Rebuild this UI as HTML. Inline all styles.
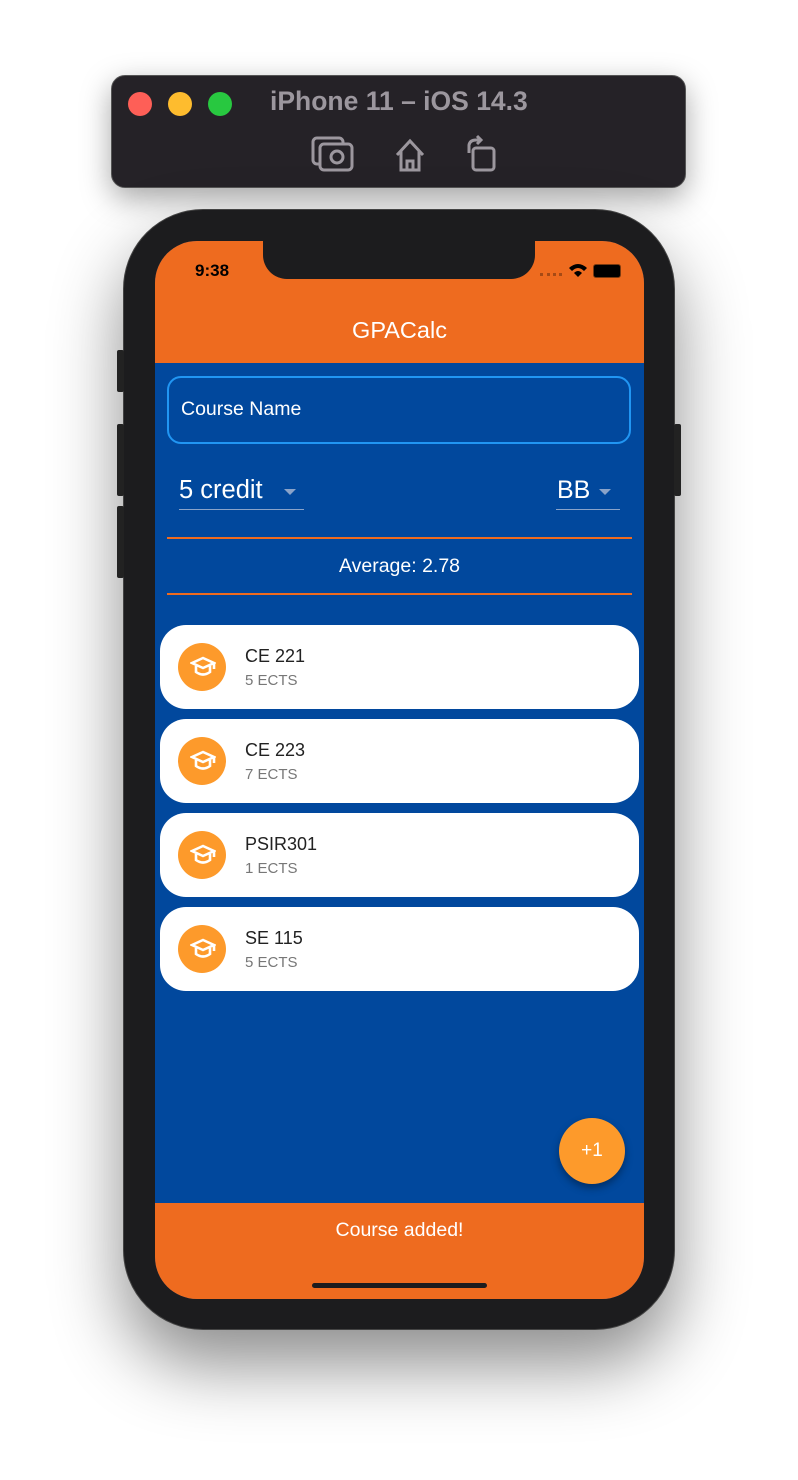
<!DOCTYPE html><html><head><style>
body{margin:0;width:798px;height:1480px;background:#fff;position:relative;overflow:hidden;font-family:"Liberation Sans",sans-serif}
.a{position:absolute}
</style></head><body>
<div class="a" style="left:111px;top:75px;width:575px;height:113px;background:#252227;border-radius:14px;border:1px solid #555;box-sizing:border-box;box-shadow:0 10px 30px rgba(0,0,0,.35)"></div>
<div class="a" style="left:128px;top:92px;width:24px;height:24px;border-radius:50%;background:#fe5f57"></div>
<div class="a" style="left:168px;top:92px;width:24px;height:24px;border-radius:50%;background:#febc2e"></div>
<div class="a" style="left:208px;top:92px;width:24px;height:24px;border-radius:50%;background:#28c840"></div>
<div class="a" style="left:270px;top:86px;font-size:26.5px;font-weight:bold;color:#9c979e">iPhone 11 – iOS 14.3</div>
<svg class="a" style="left:310px;top:133px" width="190" height="40" fill="none" stroke="#9c979e" stroke-width="3">
<rect x="3" y="5" width="30" height="26" rx="4"/><rect x="10" y="11" width="32" height="26" rx="4" fill="#252227"/><circle cx="27" cy="24" r="6"/>
<path d="M87 22 L100 8 L113 22 M91 18 V37 H109 V18 M97 37 V28 H103 V37"/>
<rect x="163" y="15" width="21" height="22" rx="3"/><path d="M159 20 V12 Q160 7 166 7 H171 M167 3 L171 7 L167 11"/>
</svg>
<div class="a" style="left:123px;top:209px;width:552px;height:1121px;background:#1c1c1e;border-radius:80px;box-shadow:0 35px 70px rgba(0,0,0,.45);border:1px solid #444;box-sizing:border-box"></div>
<div class="a" style="left:117px;top:350px;width:7px;height:42px;background:#222;border-radius:2px"></div>
<div class="a" style="left:117px;top:424px;width:7px;height:72px;background:#222;border-radius:2px"></div>
<div class="a" style="left:117px;top:506px;width:7px;height:72px;background:#222;border-radius:2px"></div>
<div class="a" style="left:674px;top:424px;width:7px;height:72px;background:#222;border-radius:2px"></div>
<div class="a" style="left:155px;top:241px;width:489px;height:1058px;background:#01489d;border-radius:42px;overflow:hidden">
 <div class="a" style="left:0;top:0;width:489px;height:122px;background:#ee6b1f"></div>
 <div class="a" style="left:108px;top:-2px;width:272px;height:40px;background:#1c1c1e;border-radius:0 0 24px 24px"></div>
 <div class="a" style="left:40px;top:20px;font-size:17px;font-weight:bold;color:#000">9:38</div>
 <div class="a" style="left:385px;top:32px;width:22px;height:3px;border-top:3px dotted rgba(0,0,0,.3)"></div>
 <svg class="a" style="left:413px;top:22px" width="20" height="14"><path d="M1 5 Q10 -3 19 5 L16 8 Q10 2 4 8Z M6 10 Q10 6 14 10 L10 14Z" fill="#000"/></svg>
 <div class="a" style="left:438px;top:23px;width:26px;height:12px;background:#000;border-radius:3px;border:1px solid #7a3a10"></div>
 <div class="a" style="left:0;top:76px;width:489px;text-align:center;font-size:23.5px;color:#fff">GPACalc</div>
 <div class="a" style="left:12px;top:135px;width:464px;height:68px;border:2px solid #2196f3;border-radius:14px;box-sizing:border-box"></div>
 <div class="a" style="left:26px;top:157px;font-size:19.5px;color:#fff">Course Name</div>
 <div class="a" style="left:24px;top:235px;font-size:25.5px;color:#fff">5 credit</div>
 <div class="a" style="left:129px;top:248px;border:6px solid transparent;border-top-color:#8aa3c9"></div>
 <div class="a" style="left:24px;top:268px;width:125px;height:1px;background:#8aa3c9"></div>
 <div class="a" style="left:402px;top:235px;font-size:25px;color:#fff">BB</div>
 <div class="a" style="left:444px;top:248px;border:6px solid transparent;border-top-color:#8aa3c9"></div>
 <div class="a" style="left:401px;top:268px;width:64px;height:1px;background:#8aa3c9"></div>
 <div class="a" style="left:12px;top:296px;width:465px;height:2px;background:#ee6b1f"></div>
 <div class="a" style="left:0;top:314px;width:489px;text-align:center;font-size:19.5px;color:#fff">Average: 2.78</div>
 <div class="a" style="left:12px;top:352px;width:465px;height:2px;background:#ee6b1f"></div>
 <div class="a" style="left:5px;top:384px;width:479px">
  <div style="height:84px;background:#fff;border-radius:26px;margin-bottom:10px;position:relative"><div class="a" style="left:18px;top:18px;width:48px;height:48px;border-radius:50%;background:#fd9a2b"></div><svg class="a" style="left:30px;top:31px" width="26" height="22" fill="none" stroke="#fff" stroke-width="2.6"><path d="M2 7 L13 2 L24 7 L13 12Z M6 10 V16 Q13 21 20 16 V10 M24 7 V13"/></svg><div class="a" style="left:85px;top:21px;font-size:18px;color:#222">CE 221</div><div class="a" style="left:85px;top:47px;font-size:15px;color:#777">5 ECTS</div></div>
  <div style="height:84px;background:#fff;border-radius:26px;margin-bottom:10px;position:relative"><div class="a" style="left:18px;top:18px;width:48px;height:48px;border-radius:50%;background:#fd9a2b"></div><svg class="a" style="left:30px;top:31px" width="26" height="22" fill="none" stroke="#fff" stroke-width="2.6"><path d="M2 7 L13 2 L24 7 L13 12Z M6 10 V16 Q13 21 20 16 V10 M24 7 V13"/></svg><div class="a" style="left:85px;top:21px;font-size:18px;color:#222">CE 223</div><div class="a" style="left:85px;top:47px;font-size:15px;color:#777">7 ECTS</div></div>
  <div style="height:84px;background:#fff;border-radius:26px;margin-bottom:10px;position:relative"><div class="a" style="left:18px;top:18px;width:48px;height:48px;border-radius:50%;background:#fd9a2b"></div><svg class="a" style="left:30px;top:31px" width="26" height="22" fill="none" stroke="#fff" stroke-width="2.6"><path d="M2 7 L13 2 L24 7 L13 12Z M6 10 V16 Q13 21 20 16 V10 M24 7 V13"/></svg><div class="a" style="left:85px;top:21px;font-size:18px;color:#222">PSIR301</div><div class="a" style="left:85px;top:47px;font-size:15px;color:#777">1 ECTS</div></div>
  <div style="height:84px;background:#fff;border-radius:26px;margin-bottom:10px;position:relative"><div class="a" style="left:18px;top:18px;width:48px;height:48px;border-radius:50%;background:#fd9a2b"></div><svg class="a" style="left:30px;top:31px" width="26" height="22" fill="none" stroke="#fff" stroke-width="2.6"><path d="M2 7 L13 2 L24 7 L13 12Z M6 10 V16 Q13 21 20 16 V10 M24 7 V13"/></svg><div class="a" style="left:85px;top:21px;font-size:18px;color:#222">SE 115</div><div class="a" style="left:85px;top:47px;font-size:15px;color:#777">5 ECTS</div></div>
 </div>
 <div class="a" style="left:404px;top:877px;width:66px;height:66px;border-radius:50%;background:#fd9a2b;box-shadow:0 4px 8px rgba(0,0,0,.35);color:#fff;font-size:19px;text-align:center;line-height:66px">+1</div>
 <div class="a" style="left:0;top:962px;width:489px;height:96px;background:#ee6b1f"></div>
 <div class="a" style="left:0;top:978px;width:489px;text-align:center;font-size:19.5px;color:#fff">Course added!</div>
 <div class="a" style="left:157px;top:1042px;width:175px;height:5px;border-radius:3px;background:#1c1c1e"></div>
</div>
</body></html>
